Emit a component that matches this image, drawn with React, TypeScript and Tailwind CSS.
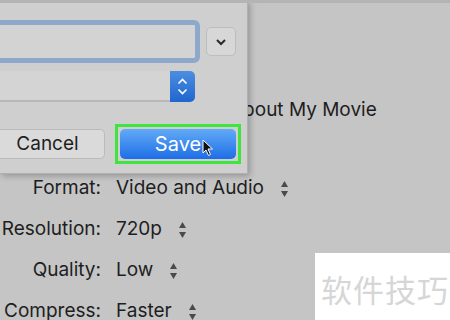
import React from 'react'

const font = { fontFamily: 'Inter, "Noto Sans", "Liberation Sans", sans-serif' }

function Stepper() {
  return (
    <svg width="9" height="20" viewBox="0 0 9 20" className="ml-[16px]">
      <path d="M4.5 2 L8 8 L1 8 Z" fill="#4a4a4a" />
      <path d="M4.5 18 L8 12 L1 12 Z" fill="#4a4a4a" />
    </svg>
  )
}

function Cursor() {
  return (
    <svg width="12" height="18" viewBox="0 0 12 18" className="absolute left-[202px] top-[139px]">
      <path
        d="M1 1 L1 14 L4 11 L6.5 16.5 L8.5 15.5 L6 10 L10.5 10 Z"
        fill="#111"
        stroke="#fff"
        strokeWidth="1"
        strokeLinejoin="round"
      />
    </svg>
  )
}

const rows = [
  { label: 'Format:', value: 'Video and Audio' },
  { label: 'Resolution:', value: '720p' },
  { label: 'Quality:', value: 'Low' },
  { label: 'Compress:', value: 'Faster' },
]

export default function App() {
  return (
    <div
      className="relative w-[450px] h-[320px] overflow-hidden bg-[#c5c5c5] border-t-[3px] border-[#b4b4b4] text-[#1e1e1e]"
      style={font}
    >
      {/* content under the sheet */}
      <div className="flex flex-col">
        <div className="pl-[230px] pt-[94px] text-[19px] leading-[26px]">About My Movie</div>
        <div className="flex flex-col pt-[45px]">
          {rows.map((r) => (
            <div key={r.label} className="flex items-center h-[41px] text-[19px]">
              <div className="w-[102px] text-right pr-[1px]">{r.label}</div>
              <div className="pl-[14px]">{r.value}</div>
              <Stepper />
            </div>
          ))}
        </div>
      </div>

      {/* sheet */}
      <div className="absolute -top-[3px] left-0 w-[248px] h-[174px] bg-[#cfcfcf] border-r border-b border-[#b0b0b0] shadow-[2px_2px_6px_rgba(0,0,0,0.25)] overflow-hidden">
        <div className="flex items-center gap-[6px] mt-[20px] -ml-[16px]">
          <div className="w-[216px] h-[43px] rounded-[6px] border-[5px] border-[#8ea8cb] bg-[#d3d3d3]" />
          <div className="w-[30px] h-[29px] rounded-[5px] border border-[#bdbdbd] bg-[#d7d7d7] flex items-center justify-center">
            <svg width="12" height="8" viewBox="0 0 12 8">
              <path d="M2 2 L6 6 L10 2" fill="none" stroke="#2a2a2a" strokeWidth="2" />
            </svg>
          </div>
        </div>

        <div className="flex mt-[8px] -ml-[16px] h-[31px] w-[211px]">
          <div className="flex-1 bg-[#d4d4d4] border-b-2 border-[#b8b8b8] rounded-l-[5px]" />
          <div className="w-[25px] rounded-r-[5px] bg-gradient-to-b from-[#4b8ee0] to-[#1f66cf] flex flex-col items-center justify-center gap-[3px]">
            <svg width="11" height="7" viewBox="0 0 11 7">
              <path d="M1.5 5.5 L5.5 1.5 L9.5 5.5" fill="none" stroke="#fff" strokeWidth="1.6" />
            </svg>
            <svg width="11" height="7" viewBox="0 0 11 7">
              <path d="M1.5 1.5 L5.5 5.5 L9.5 1.5" fill="none" stroke="#fff" strokeWidth="1.6" />
            </svg>
          </div>
        </div>

        <div className="flex items-center mt-[22px] -ml-[10px] gap-[10px]">
          <div className="w-[115px] h-[30px] rounded-[5px] border border-[#bababa] bg-[#dadada] flex items-center justify-center text-[19px]">
            Cancel
          </div>
          <div className="border-[3px] border-[#3fe43f] p-[2px]">
            <div className="w-[116px] h-[30px] rounded-[5px] bg-gradient-to-b from-[#62aaf6] to-[#1d6de6] flex items-center justify-center text-white text-[20px]">
              Save
            </div>
          </div>
        </div>
        <Cursor />
      </div>

      {/* watermark */}
      <div className="absolute left-[315px] top-[250px] w-[135px] h-[70px] bg-white flex items-center pl-[6px] pt-[2px]">
        <span
          className="text-[31px] text-[#d6d6d6] tracking-[1px]"
          style={{ fontFamily: '"Noto Sans CJK SC", sans-serif' }}
        >
          软件技巧
        </span>
      </div>
    </div>
  )
}
